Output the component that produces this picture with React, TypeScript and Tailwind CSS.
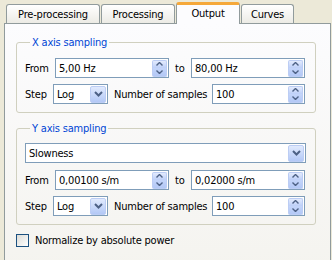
const font = { fontFamily: '"DejaVu Sans Condensed", "Liberation Sans", Arial, sans-serif' };

function Chevron({ dir }: { dir: "up" | "down" }) {
  return (
    <svg width="7" height="4" viewBox="0 0 7 4" className="block">
      {dir === "up" ? (
        <path d="M0.5 3.5 L3.5 0.5 L6.5 3.5" fill="none" stroke="#4d6185" strokeWidth="1.4" />
      ) : (
        <path d="M0.5 0.5 L3.5 3.5 L6.5 0.5" fill="none" stroke="#4d6185" strokeWidth="1.4" />
      )}
    </svg>
  );
}

function SpinButtons() {
  return (
    <div className="mr-px flex h-[17px] w-[15px] flex-col">
      <div className="flex flex-1 items-center justify-center rounded-t-[2px] border border-b-0 border-[#bccdf4] bg-gradient-to-b from-[#e3ebfd] to-[#bdcff8]">
        <Chevron dir="up" />
      </div>
      <div className="flex flex-1 items-center justify-center rounded-b-[2px] border border-t-0 border-[#bccdf4] bg-gradient-to-b from-[#c4d5fa] to-[#b3c8f6]">
        <Chevron dir="down" />
      </div>
    </div>
  );
}

function ComboButton() {
  return (
    <div className="mr-px flex h-[17px] w-[16px] items-center justify-center rounded-[2px] border border-[#bccdf4] bg-gradient-to-b from-[#e1eafd] to-[#b3c8f6]">
      <svg width="9" height="6" viewBox="0 0 9 6" className="block">
        <path d="M1 1 L4.5 4.5 L8 1" fill="none" stroke="#4d6185" strokeWidth="2" />
      </svg>
    </div>
  );
}

function Spin({ value, w }: { value: string; w: string }) {
  return (
    <div className={`flex h-[20px] ${w} items-center border border-[#7f9db9] bg-white`}>
      <span className="flex-1 pl-[3px]">{value}</span>
      <SpinButtons />
    </div>
  );
}

function Combo({ value, w }: { value: string; w: string }) {
  return (
    <div className={`flex h-[20px] ${w} items-center border border-[#7f9db9] bg-white`}>
      <span className="flex-1 pl-[3px]">{value}</span>
      <ComboButton />
    </div>
  );
}

function RangeRows({ from, to }: { from: string; to: string }) {
  return (
    <>
      <div className="flex items-center">
        <span className="w-[30px]">From</span>
        <Spin value={from} w="w-[114px]" />
        <span className="w-[22px] pl-[6px]">to</span>
        <Spin value={to} w="w-[114px]" />
      </div>
      <div className="mt-[6px] flex items-center">
        <span className="w-[28px]">Step</span>
        <Combo value="Log" w="w-[55px]" />
        <span className="w-[104px] pl-[6px]">Number of samples</span>
        <Spin value="100" w="w-[93px]" />
      </div>
    </>
  );
}

function Tab({ label, w, active }: { label: string; w: string; active?: boolean }) {
  if (active) {
    return (
      <div
        className={`relative z-10 -mb-px flex h-[22px] ${w} items-center justify-center rounded-t-[3px] border-x border-t-[3px] border-x-[#919b9c] border-t-[#f5a83a] bg-[#fcfcfe] pb-[2px]`}
      >
        {label}
      </div>
    );
  }
  return (
    <div
      className={`flex h-[19px] ${w} items-center justify-center rounded-t-[3px] border-x border-t border-[#919b9c] bg-gradient-to-b from-[#ffffff] to-[#ecebe5]`}
    >
      {label}
    </div>
  );
}

export default function App() {
  return (
    <div
      className="h-[260px] w-[332px] overflow-hidden bg-[#ece9d8] text-[11px] leading-[13px] tracking-[-0.2px] text-black"
      style={font}
    >
      <div className="flex h-[23px] items-end gap-[1px] pl-[6px]">
        <Tab label="Pre-processing" w="w-[94px]" />
        <Tab label="Processing" w="w-[74px]" />
        <Tab label="Output" w="w-[64px]" active />
        <Tab label="Curves" w="w-[53px]" />
      </div>
      <div className="ml-[4px] h-[260px] w-[327px] border border-[#919b9c] bg-gradient-to-b from-[#fcfcfe] to-[#f4f3ee] pl-[11px] pr-[14px] pt-[12px]">
        <fieldset className="rounded-[3px] border border-[#d0d0bf] px-[8px] pb-[8px] pt-[9px]">
          <legend className="ml-[5px] px-[2px] text-[#0046d5]">X axis sampling</legend>
          <RangeRows from="5,00 Hz" to="80,00 Hz" />
        </fieldset>
        <fieldset className="mt-[9px] rounded-[3px] border border-[#d0d0bf] px-[8px] pb-[8px] pt-[8px]">
          <legend className="ml-[5px] px-[2px] text-[#0046d5]">Y axis sampling</legend>
          <Combo value="Slowness" w="w-[281px]" />
          <div className="mt-[7px]">
            <RangeRows from="0,00100 s/m" to="0,02000 s/m" />
          </div>
        </fieldset>
        <label className="mt-[9px] flex items-center">
          <span className="h-[13px] w-[13px] border border-[#1c5180] bg-gradient-to-br from-[#dcdcd7] to-[#ffffff]" />
          <span className="ml-[6px]">Normalize by absolute power</span>
        </label>
      </div>
    </div>
  );
}
